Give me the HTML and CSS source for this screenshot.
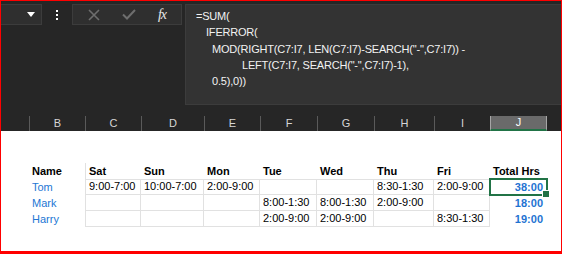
FILE: index.html
```html
<!DOCTYPE html>
<html lang="en">
<head>
    <meta charset="UTF-8">
    <title>Schedule - Total Hrs</title>
    <link rel="stylesheet" href="styles.css">
</head>
<body>
    <div class="frame">
        <!-- Formula bar -->
        <div class="toolbar">
            <div class="name-box">
                <svg width="8" height="5" viewBox="0 0 8 5"><path d="M0 0h8L4 5z" fill="#fff"/></svg>
            </div>
            <div class="dots"><span></span><span></span><span></span></div>
            <div class="fn-buttons">
                <svg width="12" height="12" viewBox="0 0 12 12"><path d="M1 1l10 10M11 1L1 11" stroke="#6e6e6e" stroke-width="1.6"/></svg>
                <svg width="14" height="11" viewBox="0 0 14 11"><path d="M1 5.5l4 4L13 1" stroke="#6e6e6e" stroke-width="2" fill="none"/></svg>
                <span class="fx">fx</span>
            </div>
            <div class="formula">
                <div>=SUM(</div>
                <div class="ind-1">IFERROR(</div>
                <div class="ind-2">MOD(RIGHT(C7:I7, LEN(C7:I7)-SEARCH("-",C7:I7)) -</div>
                <div class="ind-3">LEFT(C7:I7, SEARCH("-",C7:I7)-1),</div>
                <div class="ind-2">0.5),0))</div>
            </div>
        </div>

        <!-- Column headers -->
        <div class="cols col-heads">
            <div></div>
            <div class="ch">B</div>
            <div class="ch">C</div>
            <div class="ch">D</div>
            <div class="ch">E</div>
            <div class="ch">F</div>
            <div class="ch">G</div>
            <div class="ch">H</div>
            <div class="ch">I</div>
            <div class="ch active">J</div>
            <div></div>
        </div>

        <!-- Sheet -->
        <div class="sheet">
            <div class="blank"></div>
            <div class="cols row head">
                <div></div>
                <div class="c">Name</div>
                <div class="c">Sat</div>
                <div class="c">Sun</div>
                <div class="c">Mon</div>
                <div class="c">Tue</div>
                <div class="c">Wed</div>
                <div class="c">Thu</div>
                <div class="c">Fri</div>
                <div class="c">Total Hrs</div>
            </div>
            <div class="cols row first">
                <div></div>
                <div class="c name">Tom</div>
                <div class="c d">9:00-7:00</div>
                <div class="c d">10:00-7:00</div>
                <div class="c d">2:00-9:00</div>
                <div class="c d"></div>
                <div class="c d"></div>
                <div class="c d">8:30-1:30</div>
                <div class="c d">2:00-9:00</div>
                <div class="c total selected">38:00</div>
            </div>
            <div class="cols row">
                <div></div>
                <div class="c name">Mark</div>
                <div class="c d"></div>
                <div class="c d"></div>
                <div class="c d"></div>
                <div class="c d">8:00-1:30</div>
                <div class="c d">8:00-1:30</div>
                <div class="c d">2:00-9:00</div>
                <div class="c d"></div>
                <div class="c total">18:00</div>
            </div>
            <div class="cols row">
                <div></div>
                <div class="c name">Harry</div>
                <div class="c d"></div>
                <div class="c d"></div>
                <div class="c d"></div>
                <div class="c d">2:00-9:00</div>
                <div class="c d">2:00-9:00</div>
                <div class="c d"></div>
                <div class="c d">8:30-1:30</div>
                <div class="c total">19:00</div>
            </div>
        </div>
    </div>
</body>
</html>
```

FILE: styles.css
```css
* {
    margin: 0;
    padding: 0;
    box-sizing: border-box;
}

body {
    background-color: #fff;
}

.frame {
    width: 562px;
    height: 254px;
    border: 1px solid #ff0000;
    border-bottom-width: 3px;
    background-color: #fff;
    overflow: hidden;
}

/* Formula bar */
.toolbar {
    display: flex;
    align-items: flex-start;
    height: 115px;
    padding-top: 3px;
    background-color: #262626;
}

.name-box {
    width: 41px;
    height: 21px;
    background-color: #2f2f2f;
    border: 1px solid #3c3c3c;
    border-left: none;
    display: flex;
    align-items: center;
    justify-content: flex-end;
    padding-right: 6px;
}

.dots {
    width: 30px;
    height: 21px;
    display: flex;
    flex-direction: column;
    align-items: center;
    justify-content: center;
    gap: 2px;
}

.dots span {
    width: 2px;
    height: 2px;
    background-color: #fff;
}

.fn-buttons {
    width: 110px;
    height: 21px;
    background-color: #2f2f2f;
    border: 1px solid #3c3c3c;
    display: flex;
    align-items: center;
    justify-content: space-around;
    padding: 0 4px;
}

.fx {
    font-family: "Liberation Serif", serif;
    font-style: italic;
    font-size: 14px;
    color: #e8e8e8;
    letter-spacing: -1px;
}

.formula {
    flex: 1;
    height: 101px;
    margin-left: 3px;
    background-color: #333;
    border: 1px solid #3c3c3c;
    border-right: none;
    padding: 3px 0 0 10px;
    font-family: "Liberation Sans", Arial, sans-serif;
    font-size: 11px;
    letter-spacing: -0.2px;
    line-height: 16.3px;
    color: #f2f2f2;
    white-space: nowrap;
}

.ind-1 { padding-left: 10px; }
.ind-2 { padding-left: 16px; }
.ind-3 { padding-left: 46px; }

/* Column grid shared by headers and rows */
.cols {
    display: grid;
    grid-template-columns: 28px 56px 56px 63px 56px 57px 57px 60px 56px 57px 1fr;
}

.col-heads {
    height: 15px;
    background-color: #262626;
    font-family: "Liberation Sans", Arial, sans-serif;
    font-size: 11px;
    line-height: 15px;
    color: #d6d6d6;
}

.ch {
    text-align: center;
    border-left: 1px solid #5a5a5a;
}

.ch.active {
    background-color: #6a6a6a;
    border-left-color: #a6a6a6;
    border-right: 1px solid #a6a6a6;
    border-bottom: 2px solid #217346;
    line-height: 13px;
    color: #fff;
}

/* Sheet */
.sheet {
    font-family: "Liberation Sans", Arial, sans-serif;
    font-size: 11px;
    color: #000;
}

.blank {
    height: 32px;
}

.row {
    height: 16px;
}

.c {
    line-height: 16px;
    padding: 0 3px;
    white-space: nowrap;
}

.head .c {
    font-weight: bold;
}

.head .c:nth-child(n+3):nth-child(-n+9) {
    border-bottom: 1px solid #e1e1e1;
}

.d {
    border-right: 1px solid #e1e1e1;
    border-bottom: 1px solid #e1e1e1;
    line-height: 15px;
}

.row .c:nth-child(3) {
    border-left: 1px solid #e1e1e1;
}

.name {
    color: #2477d4;
}

.total {
    color: #1f73d2;
    font-weight: bold;
    text-align: right;
    padding-right: 4px;
}

.selected {
    position: relative;
}

.selected::before {
    content: "";
    position: absolute;
    left: -1px;
    top: -1px;
    right: -1px;
    bottom: -1px;
    border: 2px solid #217346;
}

.selected::after {
    content: "";
    position: absolute;
    right: -3px;
    bottom: -3px;
    width: 6px;
    height: 6px;
    background-color: #217346;
    border: 1px solid #fff;
}
```
